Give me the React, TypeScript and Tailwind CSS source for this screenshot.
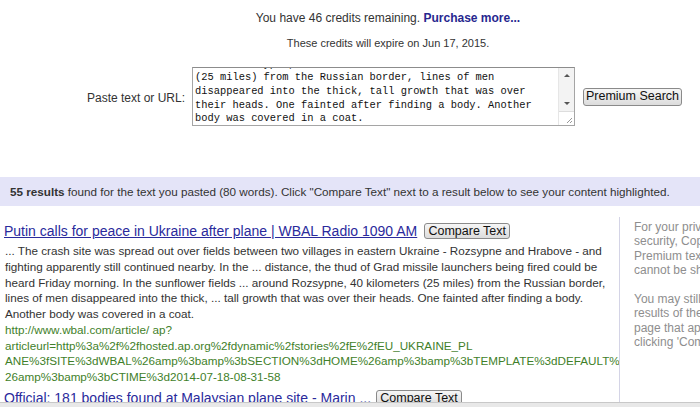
import React from "react";

const SNIPPET =
  "... The crash site was spread out over fields between two villages in eastern Ukraine - Rozsypne and Hrabove - and fighting apparently still continued nearby. In the ... distance, the thud of Grad missile launchers being fired could be heard Friday morning. In the sunflower fields ... around Rozsypne, 40 kilometers (25 miles) from the Russian border, lines of men disappeared into the thick, ... tall growth that was over their heads. One fainted after finding a body. Another body was covered in a coat.";

const URL_LINES = [
  "http://www.wbal.com/article/ ap?",
  "articleurl=http%3a%2f%2fhosted.ap.org%2fdynamic%2fstories%2fE%2fEU_UKRAINE_PL",
  "ANE%3fSITE%3dWBAL%26amp%3bamp%3bSECTION%3dHOME%26amp%3bamp%3bTEMPLATE%3dDEFAULT%",
  "26amp%3bamp%3bCTIME%3d2014-07-18-08-31-58",
];

const PASTED = [
  "around Rozsypne, 40 kilometers",
  "(25 miles) from the Russian border, lines of men",
  "disappeared into the thick, tall growth that was over",
  "their heads. One fainted after finding a body. Another",
  "body was covered in a coat.",
];

function OldButton({ children, className = "" }: { children: React.ReactNode; className?: string }) {
  return (
    <button
      className={`whitespace-nowrap rounded-[3px] border border-[#8a8a8a] bg-gradient-to-b from-[#f6f6f6] to-[#dcdcdc] text-[12.5px] leading-none text-[#111] ${className}`}
    >
      {children}
    </button>
  );
}

function FakeTextarea() {
  return (
    <div className="flex h-[59px] w-[383px] border border-[#a5a5a5] border-t-[#8c8c8c] bg-white text-left">
      <div className="flex-1 overflow-hidden pl-[2px]">
        {/* scrolled down: only the tail of the first line peeks in */}
        <div className="-mt-[10.5px] font-['Liberation_Mono',monospace] text-[10.4px] leading-[13.7px] text-[#111]">
          {PASTED.map((l, i) => (
            <div key={i} className="whitespace-pre">
              {l}
            </div>
          ))}
        </div>
      </div>
      <div className="flex w-[16px] flex-col border-l border-[#e6e6e6] bg-[#f3f3f3]">
        <div className="flex h-[43px] flex-col items-center justify-between py-[6px]">
          <span className="h-0 w-0 border-x-[3px] border-b-[3px] border-x-transparent border-b-[#555]" />
          <span className="h-0 w-0 border-x-[3px] border-t-[3px] border-x-transparent border-t-[#555]" />
        </div>
        <div className="relative flex-1 border-t border-[#ddd] bg-white">
          <svg className="absolute bottom-[1px] right-[1px]" width="8" height="8" viewBox="0 0 8 8">
            <path d="M7 2 L2 7 M7 5 L5 7" stroke="#999" strokeWidth="1" />
          </svg>
        </div>
      </div>
    </div>
  );
}

export default function App() {
  return (
    <div className="relative h-[407px] w-[700px] overflow-hidden bg-white font-['Liberation_Sans',Arial,sans-serif] text-[#333]">
      {/* credits + search form, centred on the wider page */}
      <div className="w-[776px] pt-[10px] text-center">
        <div className="text-[12px] leading-[16px] text-[#333]">
          You have 46 credits remaining.{" "}
          <span className="font-bold text-[#27278f]">Purchase more...</span>
        </div>
        <div className="mt-[10px] text-[11px] leading-[14px] text-[#333]">
          These credits will expire on Jun 17, 2015.
        </div>
        <div className="mt-[17px] flex items-center justify-center gap-[7px] pr-[7px]">
          <span className="mt-[3px] text-[12px] text-[#333]">Paste text or URL:</span>
          <FakeTextarea />
          <OldButton className="ml-[1px] h-[18px] w-[99px]">Premium Search</OldButton>
        </div>
      </div>

      {/* results band */}
      <div className="mt-[51px] flex h-[29px] w-[776px] items-center bg-[#e4e4f8] pl-[10px] text-[11.7px] text-[#333]">
        <span className="whitespace-nowrap">
          <b>55 results</b> found for the text you pasted (80 words). Click "Compare Text" next to a result below to see
          your content highlighted.
        </span>
      </div>

      <div className="flex">
        <div className="w-[619px] pl-[4px] pr-[5px] pt-[16px]">
          <div className="flex items-center gap-[7px]">
            <span className="text-[14px] leading-[18px] text-[#2a2a9c] underline">
              Putin calls for peace in Ukraine after plane | WBAL Radio 1090 AM
            </span>
            <OldButton className="h-[16px] w-[86px]">Compare Text</OldButton>
          </div>
          <p className="mt-[3px] pl-[1px] text-[11.7px] leading-[15.75px] text-[#333]">{SNIPPET}</p>
          <div className="pl-[1px] text-[11.7px] leading-[15.75px] text-[#3f7f2a]">
            {URL_LINES.map((l) => (
              <div key={l} className="whitespace-nowrap">
                {l}
              </div>
            ))}
          </div>
          <div className="mt-[4px] flex items-center gap-[5px]">
            <span className="whitespace-nowrap text-[14px] leading-[18px] text-[#2a2a9c] underline">
              Official: 181 bodies found at Malaysian plane site - Marin ...
            </span>
            <OldButton className="h-[16px] w-[86px]">Compare Text</OldButton>
          </div>
        </div>
        <div className="mt-[11px] border-l border-[#d4d4e6] pl-[14px] pt-[3px] text-[12px] leading-[14.4px] text-[#8e8e8e]">
          <div className="whitespace-nowrap">
            For your privacy and
            <br />
            security, Copyscape
            <br />
            Premium text searches
            <br />
            cannot be shown
          </div>
          <div className="mt-[14.4px] whitespace-nowrap">
            You may still view the
            <br />
            results of the search
            <br />
            page that appears by
            <br />
            clicking 'Compare Text'
          </div>
          <div className="h-[200px]" />
        </div>
      </div>

      {/* browser horizontal scrollbar over the page bottom */}
      <div className="absolute bottom-0 left-0 h-[5px] w-full border-t border-[#c8c8c8] bg-[#e8e8e8]" />
    </div>
  );
}
